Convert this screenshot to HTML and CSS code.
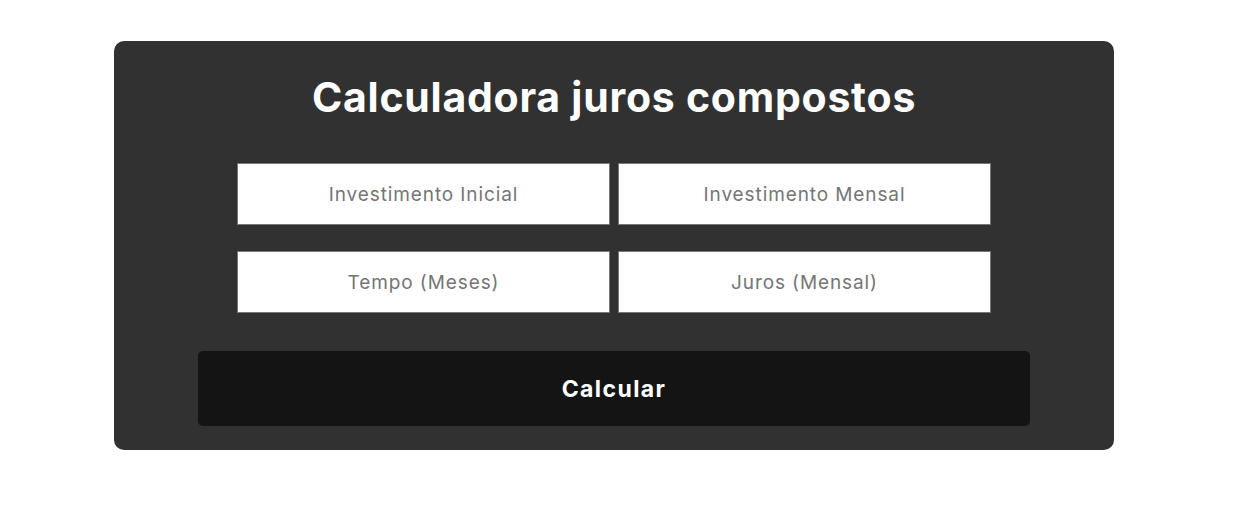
FILE: index.html
```html
<!DOCTYPE html>
<html lang="pt-BR">
<head>
<meta charset="utf-8">
<title>Calculadora juros compostos</title>
<link rel="stylesheet" href="styles.css">
</head>
<body>
<main class="page">
  <section class="card">
    <h1 class="title">Calculadora juros compostos</h1>
    <form class="form">
      <div class="fields">
        <input class="field" type="text" placeholder="Investimento Inicial">
        <input class="field" type="text" placeholder="Investimento Mensal">
        <input class="field" type="text" placeholder="Tempo (Meses)">
        <input class="field" type="text" placeholder="Juros (Mensal)">
      </div>
      <button class="submit" type="button">Calcular</button>
    </form>
  </section>
</main>
</body>
</html>
```

FILE: styles.css
```css
* { box-sizing: border-box; }
html, body { margin: 0; background: #ffffff; }
body { font-family: "Inter", "Open Sans", sans-serif; }
.page { padding: 41px 0 0 114px; }
.card {
  width: 1000px;
  height: 409px;
  background: #313131;
  border-radius: 10px;
  padding: 28px 0 24px;
  display: flex;
  flex-direction: column;
  align-items: center;
}
.title {
  margin: 0;
  color: #ffffff;
  font-size: 41px;
  font-weight: 700;
  line-height: 56px;
  letter-spacing: 0.75px;
}
.form {
  margin-top: 38px;
  display: flex;
  flex-direction: column;
  align-items: center;
}
.fields {
  display: grid;
  grid-template-columns: 373px 373px;
  column-gap: 8px;
  row-gap: 26px;
}
.field {
  height: 62px;
  border: 1px solid #767676;
  background: #ffffff;
  text-align: center;
  font-family: inherit;
  font-size: 19px;
  letter-spacing: 0.9px;
  color: #333;
  outline: none;
}
.field::placeholder { color: #757575; }
.submit {
  margin-top: 38px;
  width: 832px;
  height: 75px;
  border: none;
  border-radius: 5px;
  background: #141414;
  color: #ffffff;
  font-family: inherit;
  font-size: 23px;
  font-weight: 700;
  letter-spacing: 1.4px;
}
```
